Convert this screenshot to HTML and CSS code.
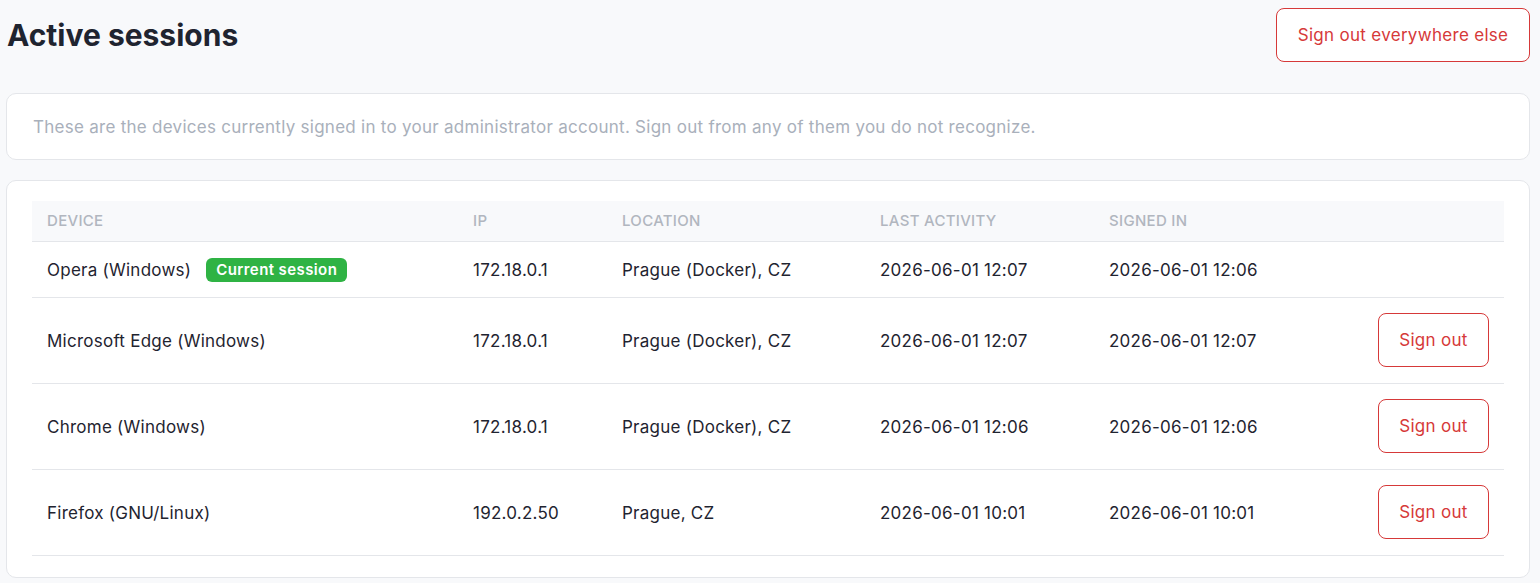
FILE: index.html
```html
<!DOCTYPE html>
<html lang="en">
<head>
<meta charset="utf-8">
<title>Active sessions</title>
<link rel="stylesheet" href="styles.css">
</head>
<body>
<div class="page">
  <header class="page-header">
    <h1 class="title">Active sessions</h1>
    <button class="btn btn-outline-danger btn-lg">Sign out everywhere else</button>
  </header>
  <section class="card card-intro">
    <p class="muted">These are the devices currently signed in to your administrator account. Sign out from any of them you do not recognize.</p>
  </section>
  <section class="card card-table">
    <table class="sessions">
      <colgroup>
        <col class="c-device"><col class="c-ip"><col class="c-loc"><col class="c-last"><col class="c-signed"><col>
      </colgroup>
      <thead>
        <tr><th>Device</th><th>IP</th><th>Location</th><th>Last activity</th><th>Signed in</th><th></th></tr>
      </thead>
      <tbody>
        <tr class="row-current">
          <td>Opera (Windows)<span class="badge">Current session</span></td>
          <td>172.18.0.1</td><td>Prague (Docker), CZ</td><td>2026-06-01 12:07</td><td>2026-06-01 12:06</td><td></td>
        </tr>
        <tr>
          <td>Microsoft Edge (Windows)</td>
          <td>172.18.0.1</td><td>Prague (Docker), CZ</td><td>2026-06-01 12:07</td><td>2026-06-01 12:07</td>
          <td class="act"><button class="btn btn-outline-danger">Sign out</button></td>
        </tr>
        <tr>
          <td>Chrome (Windows)</td>
          <td>172.18.0.1</td><td>Prague (Docker), CZ</td><td>2026-06-01 12:06</td><td>2026-06-01 12:06</td>
          <td class="act"><button class="btn btn-outline-danger">Sign out</button></td>
        </tr>
        <tr>
          <td>Firefox (GNU/Linux)</td>
          <td>192.0.2.50</td><td>Prague, CZ</td><td>2026-06-01 10:01</td><td>2026-06-01 10:01</td>
          <td class="act"><button class="btn btn-outline-danger">Sign out</button></td>
        </tr>
      </tbody>
    </table>
  </section>
</div>
</body>
</html>
```

FILE: styles.css
```css
* { box-sizing: border-box; }
html, body { margin: 0; padding: 0; }
body {
  background: #f8f9fb;
  font-family: Inter, "Noto Sans", sans-serif;
  color: #1f2430;
  font-size: 17px;
  letter-spacing: 0.25px;
}
.page {
  padding: 8px 10px 6px 6px;
}
.page-header {
  display: flex;
  justify-content: space-between;
  align-items: center;
  margin-bottom: 31px;
}
.title {
  margin: 0 0 0 1px;
  font-size: 30px;
  font-weight: 700;
  letter-spacing: 0px;
  color: #1f2430;
}
.btn {
  font-family: Inter, "Noto Sans", sans-serif;
  background: #fff;
  border: 1px solid #d63939;
  color: #d63939;
  border-radius: 8px;
  font-size: 17px;
  letter-spacing: 0.3px;
  height: 54px;
  padding: 0 20px;
  white-space: nowrap;
  cursor: pointer;
}
.btn-lg { padding: 0; width: 254px; }
.card {
  background: #fff;
  border: 1px solid #e4e6ea;
  border-radius: 10px;
}
.card-intro {
  height: 67px;
  display: flex;
  align-items: center;
  padding: 0 26px;
  margin-bottom: 20px;
}
.muted {
  margin: 0;
  color: #a9b0bb;
  font-size: 17px;
  letter-spacing: 0.27px;
}
.card-table {
  padding: 20px 25px 21px 25px;
}
.sessions {
  width: 100%;
  border-collapse: collapse;
  table-layout: fixed;
}
.c-device { width: 426px; }
.c-ip { width: 149px; }
.c-loc { width: 258px; }
.c-last { width: 229px; }
.c-signed { width: 229px; }
.sessions th {
  background: #f8f9fb;
  text-align: left;
  text-transform: uppercase;
  font-size: 15px;
  font-weight: 500;
  color: #b1b6bf;
  letter-spacing: 0.3px;
  height: 40px;
  padding: 0 15px;
  border-bottom: 1px solid #e4e6ea;
}
.sessions td {
  padding: 1px 15px 0;
  height: 86px;
  border-bottom: 1px solid #e4e6ea;
  white-space: nowrap;
}
.sessions .row-current td { height: 56px; }
.sessions td.act { text-align: right; padding-top: 0; }
.sessions td.act .btn { width: 111px; padding: 0; }
.badge {
  display: inline-block;
  margin-left: 15px;
  background: #2fb344;
  color: #fff;
  font-weight: 600;
  font-size: 15px;
  letter-spacing: 0.4px;
  line-height: 24px;
  height: 24px;
  padding: 0 10px;
  border-radius: 6px;
  vertical-align: 1px;
}
```
